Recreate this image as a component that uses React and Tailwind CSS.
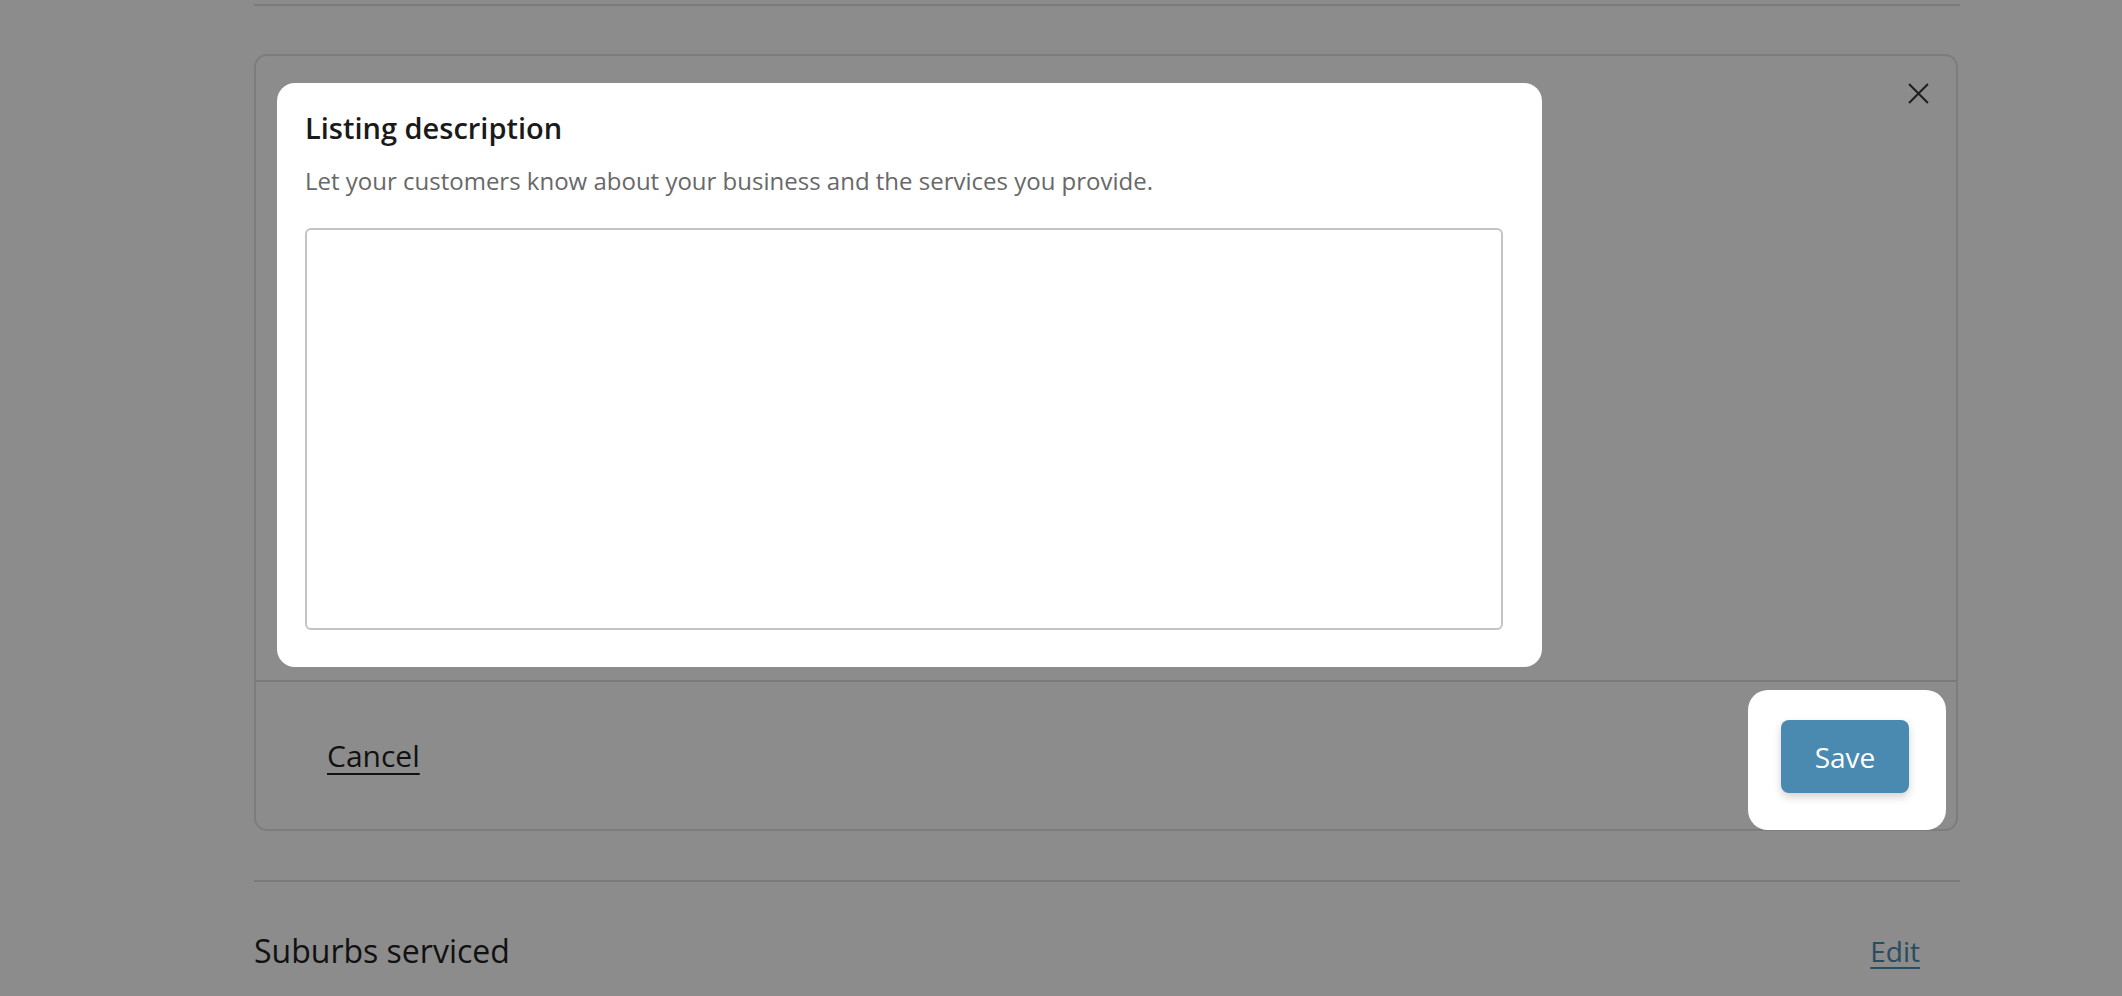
import React from 'react';

const CloseIcon = () => (
  <svg viewBox="0 0 20 20" className="w-[21px] h-[21px]" fill="none" stroke="currentColor" strokeWidth="2">
    <path d="M1 1 L19 19 M19 1 L1 19" />
  </svg>
);

const App = () => {
  return (
    <div className="relative min-h-[996px] bg-white font-['Open_Sans',sans-serif] text-[#1f1f1f]">
      <div className="pl-[254px] w-[1960px]">
        <div className="mt-[4px] h-[2px] bg-[#dedede]" />

        <div className="relative mt-[48px] w-[1704px] border-2 border-[#e3e3e3] rounded-[13px]">
          <button className="absolute top-[27px] right-[27px] text-[#3a3a3a]">
            <CloseIcon />
          </button>

          <div className="pt-[27px] pb-[13px] pl-[21px]">
            <div className="relative z-20 w-[1265px] h-[584px] bg-white rounded-[18px] pt-[26px] pl-[28px]">
              <h2 className="text-[29px] leading-[38px] font-semibold text-[#1a1a1a]">Listing description</h2>
              <p className="mt-[18px] text-[24px] leading-[32px] text-[#686868]">
                Let your customers know about your business and the services you provide.
              </p>
              <textarea className="mt-[31px] block w-[1198px] h-[402px] border-2 border-[#c4c4c4] rounded-[6px] resize-none outline-none" />
            </div>
          </div>

          <div className="h-[2px] bg-[#dedede]" />

          <div className="flex justify-between h-[147px]">
            <button className="self-center ml-[71px] text-[30px] leading-[40px] underline underline-offset-[6px] decoration-2 text-[#1f1f1f]">
              Cancel
            </button>
            <div className="relative z-20 self-start mt-[8px] mr-[10px] bg-white rounded-[20px] pt-[30px] pb-[37px] pl-[33px] pr-[37px]">
              <button className="w-[128px] h-[73px] rounded-[8px] bg-[#4a8ab0] text-white text-[28px] shadow-[0_4px_8px_rgba(0,0,0,0.18)]">
                Save
              </button>
            </div>
          </div>
        </div>

        <div className="mt-[49px] h-[2px] bg-[#dedede]" />

        <div className="flex justify-between items-center mt-[47px] pr-[40px]">
          <h3 className="text-[32px] leading-[44px] text-[#1f1f1f]">Suburbs serviced</h3>
          <a className="text-[28px] leading-[38px] underline underline-offset-[5px] text-[#4a8ab0]">Edit</a>
        </div>
      </div>

      <div className="fixed inset-0 z-10 bg-black/45" />
    </div>
  );
};

export default App;
